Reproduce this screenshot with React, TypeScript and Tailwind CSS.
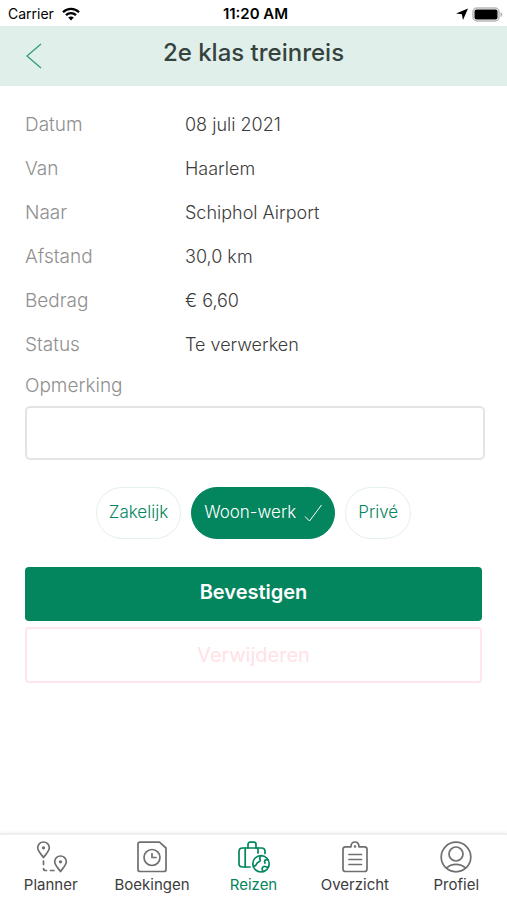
import { useState } from "react";

// ── Trip data ─────────────────────────────────────────────────────
const details = [
  { label: "Datum", value: "08 juli 2021" },
  { label: "Van", value: "Haarlem" },
  { label: "Naar", value: "Schiphol Airport" },
  { label: "Afstand", value: "30,0 km" },
  { label: "Bedrag", value: "€ 6,60" },
  { label: "Status", value: "Te verwerken" },
];

const categories = ["Zakelijk", "Woon-werk", "Privé"];

// ── Tab bar icons ─────────────────────────────────────────────────
const iconProps = {
  viewBox: "0 0 32 32",
  fill: "none",
  stroke: "currentColor",
  strokeWidth: 1.7,
  strokeLinecap: "round" as const,
  strokeLinejoin: "round" as const,
  className: "h-8 w-8 overflow-visible",
  "aria-hidden": true,
};

function PlannerIcon() {
  return (
    <svg {...iconProps}>
      <path d="M8.500 16.500C5.800 12.800 2.700 10 2.700 6.800a5.800 5.800 0 0 1 11.600 0c0 3.200-3.100 6-5.800 9.700Z" />
      <circle cx="8.500" cy="6.800" r=".8" fill="currentColor" />
      <path d="M25.500 30.500c-2.700-3.700-5.800-6.500-5.800-9.700a5.800 5.800 0 0 1 11.600 0c0 3.200-3.100 6-5.800 9.700Z" />
      <circle cx="25.500" cy="20.800" r=".8" fill="currentColor" />
      <path d="M8.500 20v3.500M8.500 27.500q0 2 2 2h1M15.500 29.500H19" />
    </svg>
  );
}

function BookingsIcon() {
  return (
    <svg {...iconProps}>
      <path d="M4 1.200h19.500l6.500 5.800v21.500q0 2-2 2H4q-2 0-2-2V3.200q0-2 2-2Z" />
      <circle cx="16" cy="16.500" r="8" />
      <path d="M16 12.500v4h4" />
    </svg>
  );
}

function TripsIcon() {
  return (
    <svg {...iconProps}>
      <path d="M13 26H5.500Q2 26 2 22.500v-12Q2 7 5.500 7h19Q28 7 28 10.500v2" />
      <path d="M11 7V3.500Q11 1.200 13.300 1.200h3.400Q19 1.200 19 3.500V7M8.200 7v19M21 7v5" />
      <circle cx="24" cy="22.800" r="8.200" />
      <path d="M16.500 25c4 .5 2-2.500 4.300-3.500s3.200-2 1.800-4l1-2.500M31 19c-3-1-4 1-3 3M26 30.500c-2-3 0-5.500 2-5s2 1.200 3.500.2" />
    </svg>
  );
}

function OverviewIcon() {
  return (
    <svg {...iconProps}>
      <path d="M12 5.800H6.500Q4 5.800 4 8.300V28q0 2.500 2.500 2.500h19Q28 30.500 28 28V8.300q0-2.500-2.500-2.500H20c0-6.400-8-6.400-8 0Z" strokeDasharray="none" />
      <path d="M10 13.500h12.500M10 18.500h12.500M10 23.500h12.500" />
      <circle cx="16" cy="5.500" r=".5" fill="currentColor" />
    </svg>
  );
}

function ProfileIcon() {
  return (
    <svg {...iconProps}>
      <circle cx="16" cy="16" r="14.800" />
      <circle cx="16" cy="13" r="7" />
      <path d="M6.500 27c5-4.800 14-4.800 19 0" />
    </svg>
  );
}

const tabs = [
  { name: "Planner", href: "#planner", icon: PlannerIcon },
  { name: "Boekingen", href: "#boekingen", icon: BookingsIcon },
  { name: "Reizen", href: "#reizen", icon: TripsIcon },
  { name: "Overzicht", href: "#overzicht", icon: OverviewIcon },
  { name: "Profiel", href: "#profiel", icon: ProfileIcon },
];

function StatusBar() {
  return (
    <div className="grid h-[26px] grid-cols-3 items-center pl-2 pr-1 pt-0.5 text-sm text-black">
      <span className="flex items-center gap-2">
        Carrier
        <svg viewBox="0 0 18 14" className="h-3.5 w-[18px]" fill="none" stroke="currentColor" strokeWidth="2.300" aria-hidden="true">
          <path d="M1 5.200C5.500.800 12.500.800 17 5.200M4 8.200c2.800-2.700 7.200-2.700 10 0" />
          <path d="M6.200 10.600c1.600-1.400 4-1.400 5.600 0L9 13.500Z" fill="currentColor" stroke="none" />
        </svg>
      </span>
      <span className="text-center text-[15px] font-semibold">11:20 AM</span>
      <span className="flex items-center justify-end gap-1">
        <svg viewBox="0 0 12 12" className="h-3 w-3" fill="currentColor" aria-hidden="true">
          <path d="M12 .500 7 12 5.800 6.300 0 5.500Z" />
        </svg>
        <svg viewBox="0 0 31 15" className="h-[15px] w-[31px]" aria-hidden="true">
          <rect x="1" y="1" width="26" height="13" rx="4" fill="#fff" stroke="#b8b8b8" strokeWidth="1.500" />
          <rect x="2.500" y="2.500" width="23" height="10" rx="2" fill="#000" />
          <path d="M28.500 5v5q2-.8 2-2.500t-2-2.500Z" fill="#b8b8b8" />
        </svg>
      </span>
    </div>
  );
}

export default function App() {
  const [category, setCategory] = useState("Woon-werk");
  const [note, setNote] = useState("");

  return (
    <div className="flex min-h-screen flex-col bg-white font-['Inter',sans-serif] text-[#3c3c3c]">
      <StatusBar />

      {/* Title bar */}
      <header className="grid h-[60px] grid-cols-[80px_1fr_80px] items-center bg-[#e1efea]">
        <button type="button" aria-label="Terug" className="justify-self-start pl-[26px] text-[#2f9d78]">
          <svg viewBox="0 0 16 26" className="h-[26px] w-4" fill="none" stroke="currentColor" strokeWidth="1.300" aria-hidden="true">
            <path d="M15 1 1 13l14 12" />
          </svg>
        </button>
        <h1 className="pb-1.5 text-center text-2xl leading-7 font-medium text-[#35433e]">2e klas treinreis</h1>
      </header>

      <main className="flex-1 pt-[17px] pb-6 pl-[25px] pr-[22px]">
        <dl className="text-lg font-light">
          {details.map((row) => (
            <div key={row.label} className="flex h-11 items-center">
              <dt className="w-40 shrink-0 text-[19px] text-[#8f8f8f]">{row.label}</dt>
              <dd>{row.value}</dd>
            </div>
          ))}
        </dl>

        <label htmlFor="note" className="flex h-[39px] items-center text-[19px] font-light text-[#8f8f8f]">
          Opmerking
        </label>
        <input
          id="note"
          type="text"
          value={note}
          onChange={(e) => setNote(e.target.value)}
          className="block h-[54px] w-full rounded-[5px] border-2 border-[#e4e4e4] px-3 text-lg font-light outline-none"
        />

        {/* Trip category */}
        <div className="flex justify-center gap-2.5 pt-[27px] pr-[3px] pb-7">
          {categories.map((name) => {
            const selected = name === category;
            return (
              <button
                key={name}
                type="button"
                aria-pressed={selected}
                onClick={() => setCategory(name)}
                className={`flex h-[52px] items-center gap-2 rounded-full border px-3 text-[17px] font-light ${
                  selected ? "border-[#03855e] bg-[#03855e] text-white" : "border-[#e3f0ec] bg-white text-[#03855e]"
                }`}
              >
                {name}
                {selected && (
                  <svg viewBox="0 0 18 18" className="h-[18px] w-[18px]" fill="none" stroke="currentColor" strokeWidth="1" aria-hidden="true">
                    <path d="M1 12.500 5.500 17 17.500 1" />
                  </svg>
                )}
              </button>
            );
          })}
        </div>

        <div className="flex flex-col gap-1.5 pr-[3px]">
          <button type="button" className="h-[54px] rounded bg-[#03855e] pb-1 text-xl font-semibold text-white">
            Bevestigen
          </button>
          <button type="button" className="h-14 rounded border-2 border-[#ffe6ea] bg-white text-xl text-[#ffe1e6]">
            Verwijderen
          </button>
        </div>
      </main>

      {/* Tab bar */}
      <nav className="grid h-[67px] grid-cols-5 border-t-2 border-[#efefef] bg-white shadow-[0_-1px_3px_rgba(0,0,0,0.05)]">
        {tabs.map((tab) => (
          <a
            key={tab.name}
            href={tab.href}
            aria-current={tab.name === "Reizen" ? "page" : undefined}
            className={`flex flex-col items-center gap-0.5 pt-1.5 text-[15px] leading-5 ${tab.name === "Reizen" ? "text-[#03855e]" : "text-[#6f6f6f]"}`}
          >
            <tab.icon />
            <span className={tab.name === "Reizen" ? "" : "text-[#3c3c3c]"}>{tab.name}</span>
          </a>
        ))}
      </nav>
    </div>
  );
}
